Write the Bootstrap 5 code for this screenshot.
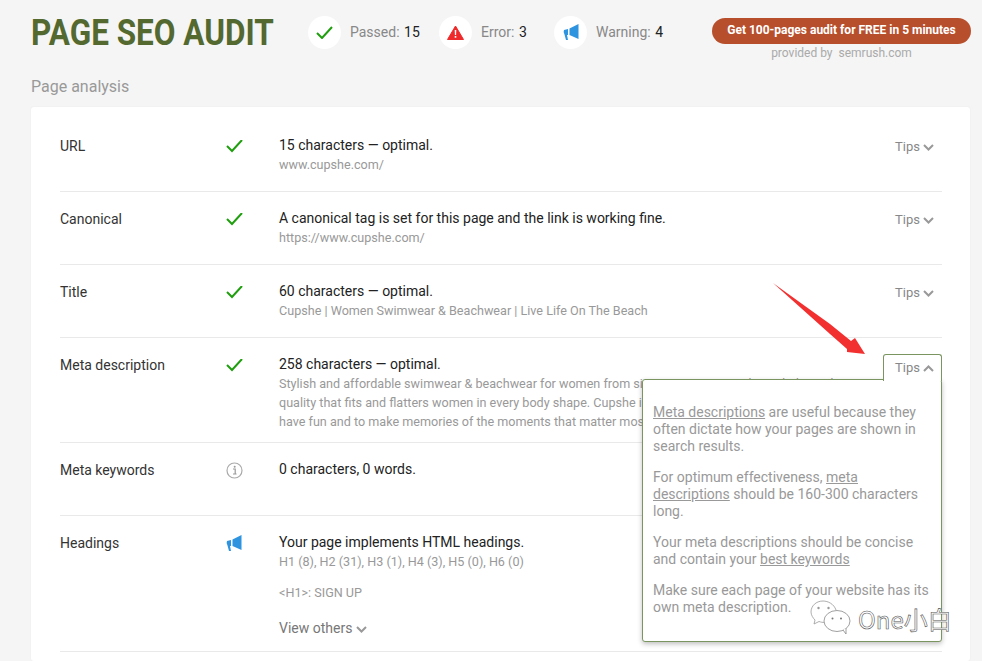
<!DOCTYPE html>
<html lang="en"><head><meta charset="utf-8"><title>Page SEO Audit</title>
<link rel="stylesheet" href="https://cdn.jsdelivr.net/npm/bootstrap@5.3.0/dist/css/bootstrap.min.css">
<style>
html,body{height:661px;overflow:hidden}
body{background:#f5f5f5;font-family:Roboto,"Liberation Sans",sans-serif;font-size:14px;line-height:19px;color:#222;position:relative}
.page-wrap{padding:16px 12px 0 31px}
.top-bar{height:59px}
.title-slot{width:277px;flex:none}
.main-title{font-family:Roboto,sans-serif;font-weight:700;font-size:36px;line-height:34px;color:#53692f;margin:0;white-space:nowrap;display:inline-block;transform:scaleX(.875);transform-origin:left center}
.stat-item{gap:9px;color:#888}
.stat-wide{width:131px}
.stat-mid{width:115px}
.stat-item b{font-weight:400;color:#222;margin-left:1px}
.stat-disc{width:33px;height:33px;border-radius:50%;background:#fff;flex:none}
.cta-box{margin-left:auto;margin-right:-1px;width:259px;text-align:center}
.cta-pill{display:block;margin-top:2px;height:26px;line-height:25px;border-radius:13px;background:#b84f2c;color:#fff;font-size:12px;font-weight:700;text-decoration:none}
.cta-note{font-size:12px;line-height:17px;color:#aaa;margin-top:1px}
.section-name{font-size:16px;line-height:20px;color:#999;margin:2px 0 10px}
.audit-card{background:#fff;border-radius:3px;padding:12px 28px 0 29px;box-shadow:0 0 2px rgba(0,0,0,.06);position:relative;height:554px}
.audit-row{min-height:73px;padding:17px 0 11px;border-bottom:1px solid #e9e9e9}
.row-tall{padding-bottom:13px}
.row-label{width:166px;flex:none;color:#333;padding-top:1px}
.row-mark{width:53px;flex:none}
.row-body{flex:1;min-width:0}
.row-sub{font-size:12.6px;color:#999}
.spaced-top{margin-top:12px}
.view-more{margin-top:17px;color:#777}
.tips-toggle{flex:none;width:47px;color:#888;font-size:13px;white-space:nowrap;margin-top:1px}
.tips-open{position:absolute;right:28px;top:247px;width:59px;height:27px;background:#fff;border:1px solid #7b9561;border-bottom:0;border-radius:3px 3px 0 0;z-index:3;color:#888;font-size:13px;padding:3px 0 0 11px;white-space:nowrap}
.tips-panel{position:absolute;right:28px;top:272px;width:300px;height:263px;background:#fff;border:1px solid #7b9561;border-radius:3px;box-shadow:0 2px 5px rgba(0,0,0,.25);z-index:2;padding:24px 10px 0;color:#999;font-size:14px;line-height:17px}
.tips-panel p{margin:0 0 14px}
.tips-panel a{color:#999;text-decoration:underline}
.red-arrow{position:absolute;left:770px;top:280px;z-index:5}
.wm-icon{position:absolute;left:810px;top:599px;z-index:6}
.wm-text{position:absolute;left:858px;top:604px;z-index:6;font-family:"Noto Sans CJK SC",sans-serif;font-size:24px;line-height:30px;color:#fff;-webkit-text-stroke:.6px #555;white-space:nowrap}
</style></head>
<body>
<div class="page-wrap">
  <header class="top-bar d-flex align-items-start">
    <div class="title-slot"><h1 class="main-title">PAGE SEO AUDIT</h1></div>
    <div class="stat-item stat-wide d-flex align-items-center"><span class="stat-disc d-flex align-items-center justify-content-center"><svg width="17" height="13" viewBox="0 0 17 13"><path d="M1 7l5 5L16 1" fill="none" stroke="#1f9e0e" stroke-width="2"/></svg></span><span>Passed: <b>15</b></span></div>
    <div class="stat-item stat-mid d-flex align-items-center"><span class="stat-disc d-flex align-items-center justify-content-center"><svg width="17" height="15" viewBox="0 0 17 15"><path d="M8.500 1L16.500 14.500H.5z" fill="#ee2a2a" stroke="#ee2a2a" stroke-linejoin="round"/><path d="M7.700 5h1.600l-.2 5H7.900zM7.700 11h1.600v1.700H7.700z" fill="#fff"/></svg></span><span>Error: <b>3</b></span></div>
    <div class="stat-item d-flex align-items-center"><span class="stat-disc d-flex align-items-center justify-content-center"><svg width="16" height="17" viewBox="0 0 16 17"><path d="M15.500 0v15L6.500 11V4.500z" fill="#2f94e0"/><path d="M5 5v6H4l1 5H3L1.500 10.500Q0 8 1 6z" fill="#2f94e0"/></svg></span><span>Warning: <b>4</b></span></div>
    <div class="cta-box"><a class="cta-pill" href="#">Get 100-pages audit for FREE in 5 minutes</a><div class="cta-note">provided by&nbsp; semrush.com</div></div>
  </header>
  <div class="section-name">Page analysis</div>
  <main class="audit-card">
    <div class="audit-row d-flex"><div class="row-label">URL</div><div class="row-mark"><svg width="17" height="13" viewBox="0 1 17 13"><path d="M1 7l5 5L16 1" fill="none" stroke="#1f9e0e" stroke-width="2"/></svg></div><div class="row-body"><div>15 characters — optimal.</div><div class="row-sub">www.cupshe.com/</div></div><div class="tips-toggle">Tips <svg width="11" height="7" viewBox="0 0 11 7"><path d="M1 1l4.500 4.500L10 1" fill="none" stroke="#999" stroke-width="2"/></svg></div></div>
    <div class="audit-row d-flex"><div class="row-label">Canonical</div><div class="row-mark"><svg width="17" height="13" viewBox="0 1 17 13"><path d="M1 7l5 5L16 1" fill="none" stroke="#1f9e0e" stroke-width="2"/></svg></div><div class="row-body"><div>A canonical tag is set for this page and the link is working fine.</div><div class="row-sub">https://www.cupshe.com/</div></div><div class="tips-toggle">Tips <svg width="11" height="7" viewBox="0 0 11 7"><path d="M1 1l4.500 4.500L10 1" fill="none" stroke="#999" stroke-width="2"/></svg></div></div>
    <div class="audit-row d-flex"><div class="row-label">Title</div><div class="row-mark"><svg width="17" height="13" viewBox="0 1 17 13"><path d="M1 7l5 5L16 1" fill="none" stroke="#1f9e0e" stroke-width="2"/></svg></div><div class="row-body"><div>60 characters — optimal.</div><div class="row-sub">Cupshe | Women Swimwear &amp; Beachwear | Live Life On The Beach</div></div><div class="tips-toggle">Tips <svg width="11" height="7" viewBox="0 0 11 7"><path d="M1 1l4.500 4.500L10 1" fill="none" stroke="#999" stroke-width="2"/></svg></div></div>
    <div class="audit-row d-flex"><div class="row-label">Meta description</div><div class="row-mark"><svg width="17" height="13" viewBox="0 1 17 13"><path d="M1 7l5 5L16 1" fill="none" stroke="#1f9e0e" stroke-width="2"/></svg></div><div class="row-body"><div>258 characters — optimal.</div><div class="row-sub text-nowrap overflow-hidden">Stylish and affordable swimwear &amp; beachwear for women from size XS to 3XL. Cupshe is dedicated to<br>quality that fits and flatters women in every body shape. Cupshe is here to inspire women to<br>have fun and to make memories of the moments that matter most.</div></div></div>
    <div class="audit-row d-flex"><div class="row-label">Meta keywords</div><div class="row-mark"><svg width="17" height="17" viewBox="0 0 17 17"><circle cx="8.500" cy="8.500" r="7.500" fill="none" stroke="#aaa" stroke-width="1.200"/><path d="M7 7h2.200v4.500M7 12h3.500" fill="none" stroke="#999" stroke-width="1.200"/><circle cx="8.700" cy="4.800" r="1" fill="#999"/></svg></div><div class="row-body">0 characters, 0 words.</div></div>
    <div class="audit-row row-tall d-flex"><div class="row-label">Headings</div><div class="row-mark"><svg width="16" height="17" viewBox="0 0 16 17"><path d="M15.500 0v15L6.500 11V4.500z" fill="#2f94e0"/><path d="M5 5v6H4l1 5H3L1.500 10.500Q0 8 1 6z" fill="#2f94e0"/></svg></div><div class="row-body"><div>Your page implements HTML headings.</div><div class="row-sub">H1 (8), H2 (31), H3 (1), H4 (3), H5 (0), H6 (0)</div><div class="row-sub spaced-top">&lt;H1&gt;: SIGN UP</div><div class="view-more">View others <svg width="11" height="7" viewBox="0 0 11 7"><path d="M1 1l4.500 4.500L10 1" fill="none" stroke="#999" stroke-width="2"/></svg></div></div></div>
    <div class="tips-open">Tips <svg width="11" height="7" viewBox="0 0 11 7"><path d="M1 6l4.500-4.500L10 6" fill="none" stroke="#999" stroke-width="2"/></svg></div>
    <aside class="tips-panel">
      <p><a href="#">Meta descriptions</a> are useful because they often dictate how your pages are shown in search results.</p>
      <p>For optimum effectiveness, <a href="#">meta descriptions</a> should be 160-300 characters long.</p>
      <p>Your meta descriptions should be concise and contain your <a href="#">best keywords</a></p>
      <p>Make sure each page of your website has its own meta description.</p>
    </aside>
  </main>
</div>
<svg class="red-arrow" width="100" height="80" viewBox="0 0 100 80"><path d="M3 3L60 54 77 69 77 72 95 74 85 58 81 61 60 44z" fill="#f23030"/></svg>
<svg class="wm-icon" width="42" height="36" viewBox="0 0 42 36"><path d="M26 11C24 5 18 2 13 2 6 2 1 7 1 13c0 3 2 6 4 8l-1 4 5-2.500c2 .7 4 1 5 .9" fill="#fff" stroke="#999" stroke-width=".8"/><ellipse cx="27" cy="22" rx="13" ry="10.500" fill="#fff" stroke="#888" stroke-width=".8"/><path d="M33 31l3 4v-6" fill="#fff" stroke="#888" stroke-width=".8"/><circle cx="8.500" cy="9" r="1.200" fill="#999"/><circle cx="18.500" cy="9" r="1.200" fill="#999"/><circle cx="22.500" cy="19.500" r="1" fill="#777"/><circle cx="31" cy="19.500" r="1" fill="#777"/></svg>
<div class="wm-text">One小白</div>
<script src="https://cdn.jsdelivr.net/npm/bootstrap@5.3.0/dist/js/bootstrap.bundle.min.js"></script>
</body></html>
